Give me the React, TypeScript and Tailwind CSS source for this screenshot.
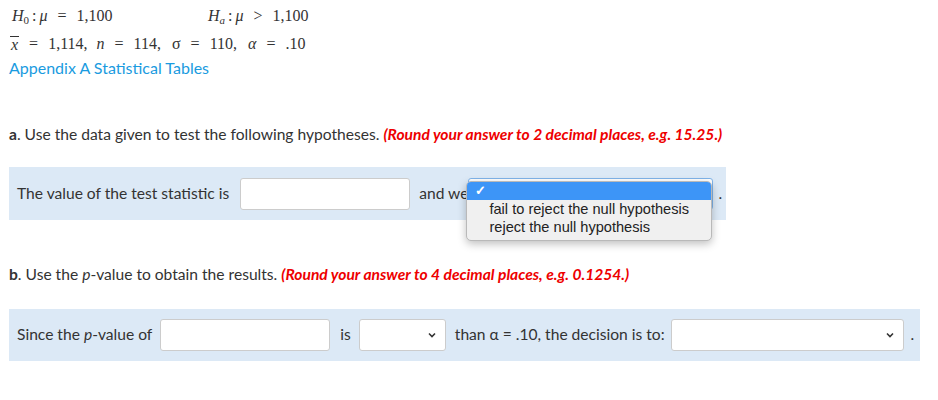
import React from "react";

function Chevron() {
  return (
    <svg width="10" height="10" viewBox="0 0 10 10" className="absolute right-[8px] top-1/2 -translate-y-1/2">
      <path d="M2 3.5 L5 6.5 L8 3.5" fill="none" stroke="#333" strokeWidth="1.6" />
    </svg>
  );
}

function Select({ w }: { w: string }) {
  return (
    <div className={`relative h-[32px] shrink-0 ${w} rounded-[3px] border border-[#ccc] bg-white`}>
      <Chevron />
    </div>
  );
}

function Eq({ op = "=" }: { op?: string }) {
  return <span className="mx-[10px]">{op}</span>;
}

export default function App() {
  const serif = { fontFamily: '"Liberation Serif", "Times New Roman", serif' };
  return (
    <div className="min-h-[400px] w-[938px] bg-white text-[15.6px] text-[#333]" style={{ fontFamily: "Lato, sans-serif" }}>
      <div className="px-[9px] pt-[5px]">
        <div className="flex h-[22px] items-center whitespace-pre text-[16px] text-[#333]" style={serif}>
          <span className="w-[199px] pl-[3px]">
            <i>H</i><sub className="text-[11px]">0</sub>
            <span className="mx-[3px]">:</span><i>μ</i><Eq />1,100
          </span>
          <span>
            <i>H</i><sub className="text-[11px]"><i>a</i></sub>
            <span className="mx-[3px]">:</span><i>μ</i><Eq op=">" />1,100
          </span>
        </div>
        <div className="mt-[6px] flex h-[22px] items-center whitespace-pre text-[16px]" style={serif}>
          <span className="ml-[1px] border-t border-[#333] px-[1px] leading-[16px]"><i>x</i></span>
          <span>
            <Eq />1,114,<span className="ml-[9px]"><i>n</i></span><Eq />114,<span className="ml-[11px]">σ</span>
            <Eq />110,<span className="ml-[11px]"><i>α</i></span><Eq />.10
          </span>
        </div>
        <div className="mt-[1px] text-[16px] text-[#1a9be0]">Appendix A Statistical Tables</div>
      </div>

      <div className="mt-[43px] whitespace-nowrap px-[9px]">
        <b>a</b>. Use the data given to test the following hypotheses.{" "}
        <span className="font-bold italic text-[#ee0000]">(Round your answer to 2 decimal places, e.g. 15.25.)</span>
      </div>

      <div className="mt-[21px] ml-[9px] flex h-[53px] w-[717px] items-center whitespace-nowrap bg-[#dce9f6] px-[8px]">
        <span>The value of the test statistic is</span>
        <div className="ml-[11px] h-[32px] w-[170px] shrink-0 rounded-[3px] border border-[#ccc] bg-white" />
        <span className="ml-[9px]">and we</span>
        <div className="relative h-[32px] w-[245px] shrink-0">
          <div className="h-[32px] w-[245px] rounded-[3px] border border-[#7fb4ea] bg-white" />
          <div
            className="absolute left-[-2px] top-[3px] w-[246px] overflow-hidden rounded-[5px] border border-[#b9b9b9] bg-[#f0f0f0] pb-[4px] text-[14.6px] text-[#222] shadow-[0_3px_8px_rgba(0,0,0,0.25)]"
            style={{ fontFamily: '"Liberation Sans", Arial, sans-serif' }}
          >
            <div className="flex h-[18px] items-center bg-[#3d95f7] pl-[8px] text-[13px] font-bold text-white">✓</div>
            <div className="pl-[22px] leading-[18px]">fail to reject the null hypothesis</div>
            <div className="pl-[22px] leading-[18px]">reject the null hypothesis</div>
          </div>
        </div>
        <span className="ml-[5px]">.</span>
      </div>

      <div className="mt-[43px] whitespace-nowrap px-[9px]">
        <b>b</b>. Use the <i>p</i>-value to obtain the results.{" "}
        <span className="font-bold italic text-[#ee0000]">(Round your answer to 4 decimal places, e.g. 0.1254.)</span>
      </div>

      <div className="mt-[22px] ml-[9px] flex h-[52px] w-[911px] items-center whitespace-nowrap bg-[#dce9f6] px-[8px]">
        <span>Since the <i>p</i>-value of</span>
        <div className="ml-[8px] h-[32px] w-[170px] shrink-0 rounded-[3px] border border-[#ccc] bg-white" />
        <span className="ml-[10px]">is</span>
        <div className="ml-[8px]"><Select w="w-[87px]" /></div>
        <span className="ml-[9px]">than α = .10, the decision is to:</span>
        <div className="ml-[6px]"><Select w="w-[233px]" /></div>
        <span className="ml-[7px]">.</span>
      </div>
    </div>
  );
}
